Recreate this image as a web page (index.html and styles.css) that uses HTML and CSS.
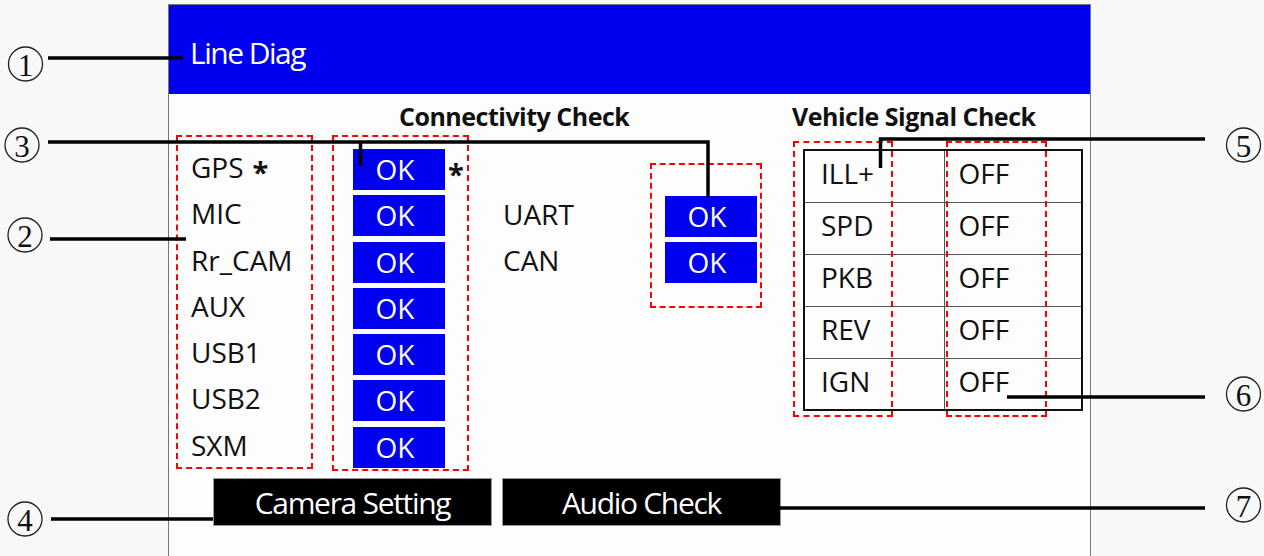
FILE: index.html
```html
<!DOCTYPE html>
<html lang="en">
<head>
  <meta charset="UTF-8">
  <title>Line Diag</title>
  <link rel="stylesheet" href="styles.css">
</head>
<body>
  <div class="sheet">
    <!-- Screen -->
    <div class="screen">
      <div class="titlebar">Line Diag</div>

      <div class="screen-body">
        <div class="checks">
          <!-- Connectivity -->
          <div class="connectivity">
            <h2 class="heading heading-conn">Connectivity Check</h2>
            <div class="conn-grid">
              <div class="dash-box labels">
                <div class="row">GPS <span class="star">*</span></div>
                <div class="row">MIC</div>
                <div class="row">Rr_CAM</div>
                <div class="row">AUX</div>
                <div class="row">USB1</div>
                <div class="row">USB2</div>
                <div class="row">SXM</div>
              </div>
              <div class="dash-box results">
                <div class="row"><span class="ok">OK</span><span class="star">*</span></div>
                <div class="row"><span class="ok">OK</span></div>
                <div class="row"><span class="ok">OK</span></div>
                <div class="row"><span class="ok">OK</span></div>
                <div class="row"><span class="ok">OK</span></div>
                <div class="row"><span class="ok">OK</span></div>
                <div class="row"><span class="ok">OK</span></div>
              </div>
              <div class="bus-labels">
                <div class="row">UART</div>
                <div class="row">CAN</div>
              </div>
              <div class="dash-box bus-results">
                <div class="row"><span class="ok">OK</span></div>
                <div class="row"><span class="ok">OK</span></div>
              </div>
            </div>
          </div>

          <!-- Vehicle signals -->
          <div class="vehicle">
            <h2 class="heading">Vehicle Signal Check</h2>
            <div class="signal-wrap">
              <table class="signals">
                <tr><td>ILL+</td><td>OFF</td></tr>
                <tr><td>SPD</td><td>OFF</td></tr>
                <tr><td>PKB</td><td>OFF</td></tr>
                <tr><td>REV</td><td>OFF</td></tr>
                <tr><td>IGN</td><td>OFF</td></tr>
              </table>
              <div class="dash-col dash-name"></div>
              <div class="dash-col dash-state"></div>
            </div>
          </div>
        </div>

        <div class="actions">
          <button class="action">Camera Setting</button>
          <button class="action">Audio Check</button>
        </div>
      </div>
    </div>

    <!-- Callouts -->
    <svg class="callouts" width="1264" height="556" viewBox="0 0 1264 556">
      <g class="leads">
        <path d="M48 58 H183"/>
        <path d="M50 239 H186"/>
        <path d="M48 142 H708 V198"/>
        <path d="M360.5 142 V166"/>
        <path d="M51 519 H213"/>
        <path d="M1205 139 H880.5 V168"/>
        <path d="M1205 397 H1007"/>
        <path d="M1205 508 H780"/>
      </g>
      <g class="marks">
        <circle cx="25.5" cy="64" r="17"/><text x="25.5" y="65">1</text>
        <circle cx="25" cy="235" r="17"/><text x="25" y="236">2</text>
        <circle cx="22" cy="145" r="17"/><text x="22" y="146">3</text>
        <circle cx="25" cy="519" r="17"/><text x="25" y="520">4</text>
        <circle cx="1243.5" cy="145" r="17"/><text x="1243.5" y="146">5</text>
        <circle cx="1243.5" cy="394" r="17"/><text x="1243.5" y="395">6</text>
        <circle cx="1243.5" cy="505" r="17"/><text x="1243.5" y="506">7</text>
      </g>
    </svg>
  </div>
</body>
</html>
```

FILE: styles.css
```css
body {
  margin: 0;
  background-color: #f8f8f8;
  font-family: "Open Sans", "Noto Sans", sans-serif;
  color: #111;
}
.sheet {
  position: relative;
  width: 1264px;
  height: 556px;
  overflow: hidden;
}
.screen {
  margin-left: 168px;
  margin-top: 4px;
  width: 923px;
  height: 560px;
  box-sizing: border-box;
  border: 1px solid #777;
  background-color: #fdfdfd;
}
.titlebar {
  height: 83px;
  padding-top: 6px;
  background-color: #0000f0;
  color: #fff;
  font-size: 30px;
  letter-spacing: -1.5px;
  line-height: 83px;
  padding-left: 21px;
}
.screen-body {
  padding-top: 7px;
}
.checks {
  display: flex;
}
.heading {
  margin: 0;
  height: 30px;
  line-height: 30px;
  font-size: 25px;
  font-weight: bold;
  letter-spacing: -0.5px;
}
.connectivity {
  margin-left: 7px;
}
.heading-conn {
  padding-left: 223px;
}
.conn-grid {
  display: flex;
  align-items: flex-start;
  margin-top: 4px;
}
.dash-box {
  box-sizing: border-box;
  border: 2px dashed #ff0000;
  display: flex;
  flex-direction: column;
  gap: 5.3px;
}
.row {
  height: 41px;
  line-height: 41px;
  font-size: 28px;
  display: flex;
  align-items: center;
  white-space: nowrap;
}
.star {
  font-weight: bold;
  font-size: 29px;
  margin-left: 9px;
  padding-top: 7px;
}
.labels {
  width: 137px;
  height: 334px;
  padding: 10px 0 0 13px;
}
.results {
  width: 137px;
  height: 336px;
  margin-left: 19px;
  padding: 12px 0 0 19px;
}
.results .star {
  margin-left: 3px;
}
.ok {
  width: 92px;
  height: 41px;
  line-height: 41px;
  background-color: #0000f0;
  color: #fff;
  text-align: center;
  padding-right: 8px;
  box-sizing: border-box;
}
.bus-labels {
  width: 147px;
  margin-top: 59px;
  display: flex;
  flex-direction: column;
  gap: 5.3px;
  padding-left: 34px;
}
.bus-results {
  width: 112px;
  height: 145px;
  margin-top: 28px;
  padding: 31px 0 0 13px;
}
.vehicle {
  margin-left: 30px;
}
.signal-wrap {
  position: relative;
  margin-top: 10px;
  padding: 8px 0 0 11px;
}
.signals {
  border-collapse: collapse;
  border: 2px solid #111;
}
.signals td {
  border: 1px solid #555;
  height: 52px;
  padding: 0 0 6px 16px;
  font-size: 28px;
  box-sizing: border-box;
}
.signals td:first-child {
  width: 140px;
}
.signals td:last-child {
  width: 138px;
  padding-left: 14px;
}
.dash-col {
  position: absolute;
  top: 0;
  width: 100px;
  height: 276px;
  box-sizing: border-box;
  border: 2px dashed #ff0000;
}
.dash-name {
  left: 1px;
}
.dash-state {
  left: 154px;
  width: 101px;
}
.actions {
  display: flex;
  gap: 10px;
  margin: 7px 0 0 44px;
}
.action {
  width: 279px;
  height: 48px;
  border: 1px solid #999;
  background-color: #000;
  color: #fff;
  font-family: "Open Sans", "Noto Sans", sans-serif;
  font-size: 30px;
  letter-spacing: -1.3px;
  padding: 0;
}
.callouts {
  position: absolute;
  left: 0;
  top: 0;
  pointer-events: none;
}
.leads path {
  fill: none;
  stroke: #000;
  stroke-width: 3.5;
}
.marks circle {
  fill: none;
  stroke: #222;
  stroke-width: 1.3;
}
.marks text {
  font-family: "Liberation Serif", serif;
  font-size: 31px;
  text-anchor: middle;
  dominant-baseline: central;
  fill: #111;
}
```
